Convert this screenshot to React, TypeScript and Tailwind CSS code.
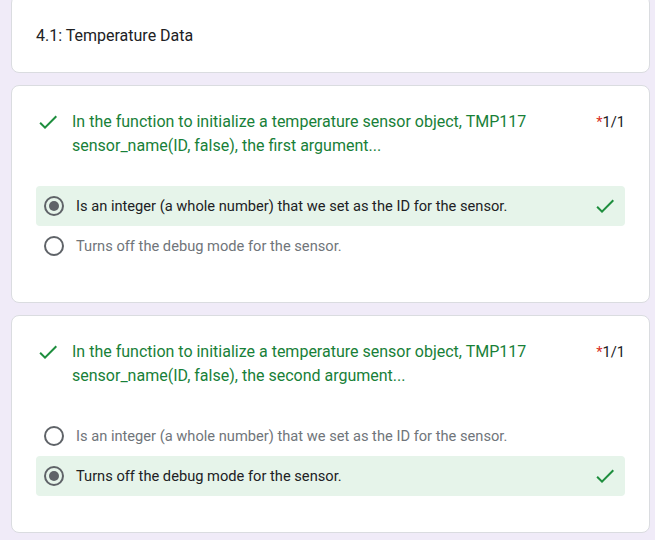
import React from 'react';

const font = { fontFamily: 'Roboto, "Liberation Sans", sans-serif' };

function Check({ className = '' }: { className?: string }) {
    return (
        <svg viewBox="0 0 24 24" className={className} fill="#1e8e3e">
            <path d="M9 16.17 4.83 12l-1.42 1.41L9 19 21 7l-1.41-1.41z" />
        </svg>
    );
}

function Radio({ checked }: { checked: boolean }) {
    return (
        <span className="flex h-5 w-5 shrink-0 items-center justify-center rounded-full border-2 border-[#5f6368]">
            {checked && <span className="h-2.5 w-2.5 rounded-full bg-[#5f6368]" />}
        </span>
    );
}

interface Option {
    text: string;
    selected: boolean;
}

function Question({ ordinal, options }: { ordinal: string; options: Option[] }) {
    return (
        <div className="rounded-lg border border-[#dadce0] bg-white px-6 pt-6 pb-9">
            <div className="flex items-start">
                <Check className="h-6 w-6 shrink-0" />
                <p className="ml-3 flex-1 text-[16px] leading-6 text-[#188038]">
                    In the function to initialize a temperature sensor object, TMP117 sensor_name(ID, false), the {ordinal} argument...
                </p>
                <span className="ml-4 text-[14.67px] leading-6 text-[#202124]">
                    <span className="text-[#d93025]">*</span>1/1
                </span>
            </div>
            <div className="mt-7 flex flex-col">
                {options.map((o) => (
                    <div
                        key={o.text}
                        className={`flex h-10 items-center rounded pl-2 pr-2 ${o.selected ? 'bg-[#e6f4ea]' : ''}`}
                    >
                        <Radio checked={o.selected} />
                        <span className={`ml-3 flex-1 text-[14.67px] ${o.selected ? 'text-[#202124]' : 'text-[#70757a]'}`}>
                            {o.text}
                        </span>
                        {o.selected && <Check className="h-6 w-6" />}
                    </div>
                ))}
            </div>
        </div>
    );
}

export default function App() {
    const a = 'Is an integer (a whole number) that we set as the ID for the sensor.';
    const b = 'Turns off the debug mode for the sensor.';
    return (
        <div className="min-h-[540px] bg-[#f0ebf8] pl-[11px] pr-[5px] pb-2" style={font}>
            <div className="flex flex-col gap-3">
                <div className="-mt-[5px] flex h-[78px] items-end rounded-lg border border-[#dadce0] bg-white px-6 pb-6">
                    <span className="text-[16px] text-[#202124]">4.1: Temperature Data</span>
                </div>
                <Question ordinal="first" options={[{ text: a, selected: true }, { text: b, selected: false }]} />
                <Question ordinal="second" options={[{ text: a, selected: false }, { text: b, selected: true }]} />
            </div>
        </div>
    );
}
